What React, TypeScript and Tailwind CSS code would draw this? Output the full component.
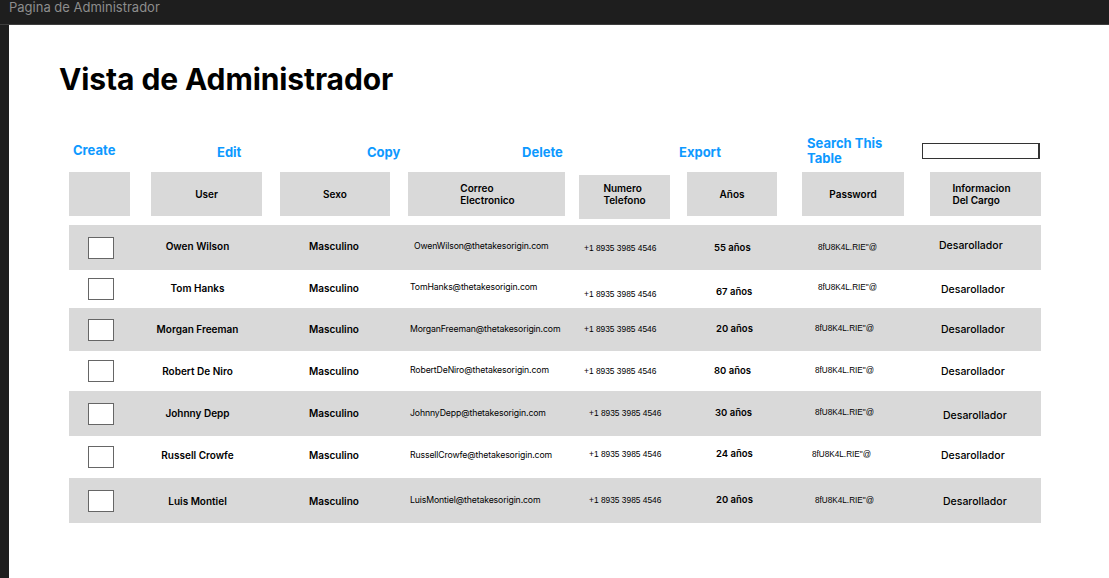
import React from "react";

type Row = {
  name: string;
  email: string;
  age: string;
  bg: string;
  h: string;
  off: string[]; // name, masc, email, phone, age, pwd, cargo (translate classes)
  pl: string[]; // email, phone, age, pwd, cargo padding-left
};

const rows: Row[] = [
  {
    name: "Owen Wilson",
    email: "OwenWilson@thetakesorigin.com",
    age: "55 años",
    bg: "bg-[#d9d9d9]",
    h: "h-[45px]",
    off: ["-translate-y-[1px]", "-translate-y-[1px]", "-translate-y-[1px]", "translate-y-[1px]", "translate-y-[1px]", "translate-y-[1px]", "-translate-y-[2px]"],
    pl: ["pl-[4px]", "pl-0", "pl-0", "pl-[6px]", "pl-0"],
  },
  {
    name: "Tom Hanks",
    email: "TomHanks@thetakesorigin.com",
    age: "67 años",
    bg: "bg-white",
    h: "h-[38px]",
    off: ["-translate-y-[1px]", "-translate-y-[1px]", "-translate-y-[1px]", "translate-y-[5px]", "translate-y-[3px]", "-translate-y-[1px]", "translate-y-[1px]"],
    pl: ["pl-0", "pl-0", "pl-[2px]", "pl-[6px]", "pl-[2px]"],
  },
  {
    name: "Morgan Freeman",
    email: "MorganFreeman@thetakesorigin.com",
    age: "20 años",
    bg: "bg-[#d9d9d9]",
    h: "h-[43px]",
    off: ["translate-y-0", "translate-y-0", "translate-y-0", "translate-y-0", "translate-y-0", "translate-y-0", "translate-y-0"],
    pl: ["pl-0", "pl-0", "pl-[2px]", "pl-[3px]", "pl-[2px]"],
  },
  {
    name: "Robert De Niro",
    email: "RobertDeNiro@thetakesorigin.com",
    age: "80 años",
    bg: "bg-white",
    h: "h-[40px]",
    off: ["translate-y-0", "translate-y-0", "translate-y-0", "translate-y-0", "translate-y-0", "translate-y-0", "translate-y-[1px]"],
    pl: ["pl-0", "pl-0", "pl-0", "pl-[3px]", "pl-[2px]"],
  },
  {
    name: "Johnny Depp",
    email: "JohnnyDepp@thetakesorigin.com",
    age: "30 años",
    bg: "bg-[#d9d9d9]",
    h: "h-[45px]",
    off: ["translate-y-0", "translate-y-0", "translate-y-0", "translate-y-0", "translate-y-0", "translate-y-0", "translate-y-[2px]"],
    pl: ["pl-0", "pl-[5px]", "pl-[1px]", "pl-[3px]", "pl-[4px]"],
  },
  {
    name: "Russell Crowfe",
    email: "RussellCrowfe@thetakesorigin.com",
    age: "24 años",
    bg: "bg-white",
    h: "h-[42px]",
    off: ["-translate-y-[2px]", "-translate-y-[2px]", "-translate-y-[1px]", "-translate-y-[3px]", "-translate-y-[3px]", "-translate-y-[2px]", "-translate-y-[1px]"],
    pl: ["pl-0", "pl-[5px]", "pl-[2px]", "pl-0", "pl-[2px]"],
  },
  {
    name: "Luis Montiel",
    email: "LuisMontiel@thetakesorigin.com",
    age: "20 años",
    bg: "bg-[#d9d9d9]",
    h: "h-[45px]",
    off: ["translate-y-[1px]", "translate-y-[1px]", "translate-y-0", "translate-y-0", "translate-y-0", "translate-y-[1px]", "translate-y-[1px]"],
    pl: ["pl-0", "pl-[5px]", "pl-[2px]", "pl-[3px]", "pl-[4px]"],
  },
];

const inter = "font-['Inter',sans-serif]";
const arial = "font-['Liberation_Sans',Arial,sans-serif]";

export default function App() {
  return (
    <div className={`w-full h-[578px] bg-[#1e1e1e] flex flex-col overflow-hidden ${inter}`}>
      <div className="h-[25px] shrink-0 border-b border-[#3d3d3d] pl-[9px] flex items-start">
        <span className="text-[13px] leading-[15px] text-[#8d8d8d]">Pagina de Administrador</span>
      </div>
      <div className="flex-1 pl-[9px] flex">
        <div className="flex-1 bg-white flex flex-col">
          <h1 className="mt-[39px] ml-[50px] text-[30px] leading-[30px] font-bold text-black tracking-[-0.1px]">
            Vista de Administrador
          </h1>

          {/* actions */}
          <div className="mt-[43px] ml-[64px] h-[30px] flex items-center text-[#0d99ff] font-bold text-[13px] leading-[15px]">
            <div className="w-[144px] -translate-y-[2px]">Create</div>
            <div className="w-[150px]">Edit</div>
            <div className="w-[155px]">Copy</div>
            <div className="w-[157px]">Delete</div>
            <div className="w-[128px]">Export</div>
            <div className="w-[115px] -translate-y-[1px]">
              Search This
              <br />
              Table
            </div>
            <div className="w-[118px] h-[16px] border border-[#333] border-r-2 border-b-[1.5px] -translate-y-[1px]" />
          </div>

          {/* header */}
          <div className="mt-[5px] ml-[60px] flex items-start text-[10px] leading-[12px] font-semibold text-black">
            <div className="w-[61px] h-[44px] bg-[#d9d9d9]" />
            <div className="ml-[21px] w-[111px] h-[44px] bg-[#d9d9d9] flex items-center justify-center">User</div>
            <div className="ml-[18px] w-[110px] h-[44px] bg-[#d9d9d9] flex items-center justify-center">Sexo</div>
            <div className="ml-[18px] w-[157px] h-[44px] bg-[#d9d9d9] flex items-center justify-center">
              <div className="text-left pl-[2px]">
                Correo
                <br />
                Electronico
              </div>
            </div>
            <div className="ml-[14px] mt-[3px] w-[91px] h-[44px] bg-[#d9d9d9] flex items-center justify-center">
              <div className="text-left -translate-y-[3px]">
                Numero
                <br />
                Telefono
              </div>
            </div>
            <div className="ml-[17px] w-[90px] h-[44px] bg-[#d9d9d9] flex items-center justify-center">Años</div>
            <div className="ml-[25px] w-[102px] h-[44px] bg-[#d9d9d9] flex items-center justify-center">Password</div>
            <div className="ml-[26px] w-[111px] h-[44px] bg-[#d9d9d9] flex items-center justify-center">
              <div className="text-left -translate-x-[4px]">
                Informacion
                <br />
                Del Cargo
              </div>
            </div>
          </div>

          {/* rows */}
          <div className="mt-[6px] ml-[60px] w-[972px] flex flex-col">
            {rows.map((r) => (
              <div key={r.name} className={`${r.bg} ${r.h} flex items-center text-black`}>
                <div className="w-[61px] h-full flex items-center">
                  <div className="ml-[19px] w-[26px] h-[22px] bg-white border border-[#666]" />
                </div>
                <div className={`w-[135px] text-center font-semibold text-[10px] ${r.off[0]}`}>{r.name}</div>
                <div className={`w-[145px] pl-[44px] font-semibold text-[10px] ${r.off[1]}`}>Masculino</div>
                <div className={`w-[174px] ${r.pl[0]} text-[8.7px] tracking-[-0.12px] ${r.off[2]}`}>{r.email}</div>
                <div className={`w-[130px] ${r.pl[1]} ${arial} text-[8.4px] ${r.off[3]}`}>+1 8935 3985 4546</div>
                <div className={`w-[98px] ${r.pl[2]} font-semibold text-[9.5px] ${r.off[4]}`}>{r.age}</div>
                <div className={`w-[127px] ${r.pl[3]} ${arial} text-[8.2px] ${r.off[5]}`}>8fU8K4L.RIE"@</div>
                <div className={`w-[102px] ${r.pl[4]} font-medium text-[10.5px] ${r.off[6]}`}>Desarollador</div>
              </div>
            ))}
          </div>
        </div>
      </div>
    </div>
  );
}
